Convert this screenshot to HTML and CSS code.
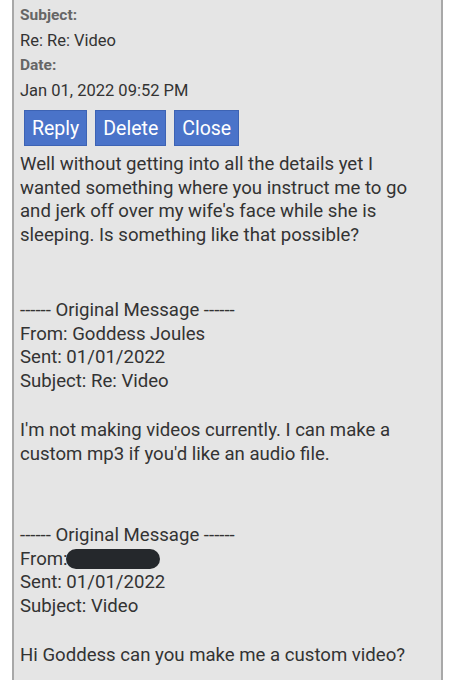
FILE: index.html
```html
<!DOCTYPE html>
<html lang="en">
<head>
    <meta charset="UTF-8">
    <meta name="viewport" content="width=device-width, initial-scale=1.0">
    <title>Message</title>
    <link rel="stylesheet" href="styles.css">
</head>
<body>
    <div class="message-panel">
        <!-- Header fields -->
        <div class="field-label">Subject:</div>
        <div class="field-value">Re: Re: Video</div>
        <div class="field-label">Date:</div>
        <div class="field-value">Jan 01, 2022 09:52 PM</div>

        <!-- Actions -->
        <div class="actions">
            <button class="action-btn">Reply</button>
            <button class="action-btn">Delete</button>
            <button class="action-btn">Close</button>
        </div>

        <!-- Message body -->
        <div class="message-body">
            <p class="para">Well without getting into all the details yet I wanted something where you instruct me to go and jerk off over my wife's face while she is sleeping. Is something like that possible?</p>

            <p class="quote-head">------ Original Message ------<br>
            From: Goddess Joules<br>
            Sent: 01/01/2022<br>
            Subject: Re: Video</p>

            <p class="para para-wide">I'm not making videos currently. I can make a custom mp3 if you'd like an audio file.</p>

            <p class="quote-head">------ Original Message ------<br>
            From:<span class="redacted"></span><br>
            Sent: 01/01/2022<br>
            Subject: Video</p>

            <p class="para">Hi Goddess can you make me a custom video?</p>
        </div>
    </div>
</body>
</html>
```

FILE: styles.css
```css
body {
    margin: 0;
    background-color: #ffffff;
    font-family: Roboto, "Liberation Sans", Arial, sans-serif;
    color: #333333;
}

.message-panel {
    margin: 0 11px 0 12px;
    min-height: 680px;
    background-color: #e5e5e5;
    border-left: 2px solid #a8a8a8;
    border-right: 2px solid #a8a8a8;
    padding: 3px 6px 0 6px;
}

.field-label {
    font-size: 15.5px;
    font-weight: bold;
    color: #666666;
    line-height: 25px;
}

.field-value {
    font-size: 16.5px;
    color: #333333;
    line-height: 25px;
}

.actions {
    display: flex;
    gap: 8px;
    margin: 7px 0 0 4px;
}

.action-btn {
    font-family: inherit;
    font-size: 19.5px;
    color: #ffffff;
    background-color: #4a73c9;
    border: 1px solid #3d63b4;
    border-radius: 0;
    padding: 0 7px;
    height: 36px;
}

.message-body {
    font-size: 18.6px;
    line-height: 23.5px;
    margin-top: 7px;
}

.para {
    margin: 0 0 52px 0;
}

.para-wide {
    margin-bottom: 58px;
}

.quote-head {
    margin: 0 0 26px 0;
}

.redacted {
    display: inline-block;
    width: 94px;
    height: 20px;
    background-color: #25282c;
    border-radius: 10px;
    vertical-align: -4px;
    margin-left: -2px;
}
```
